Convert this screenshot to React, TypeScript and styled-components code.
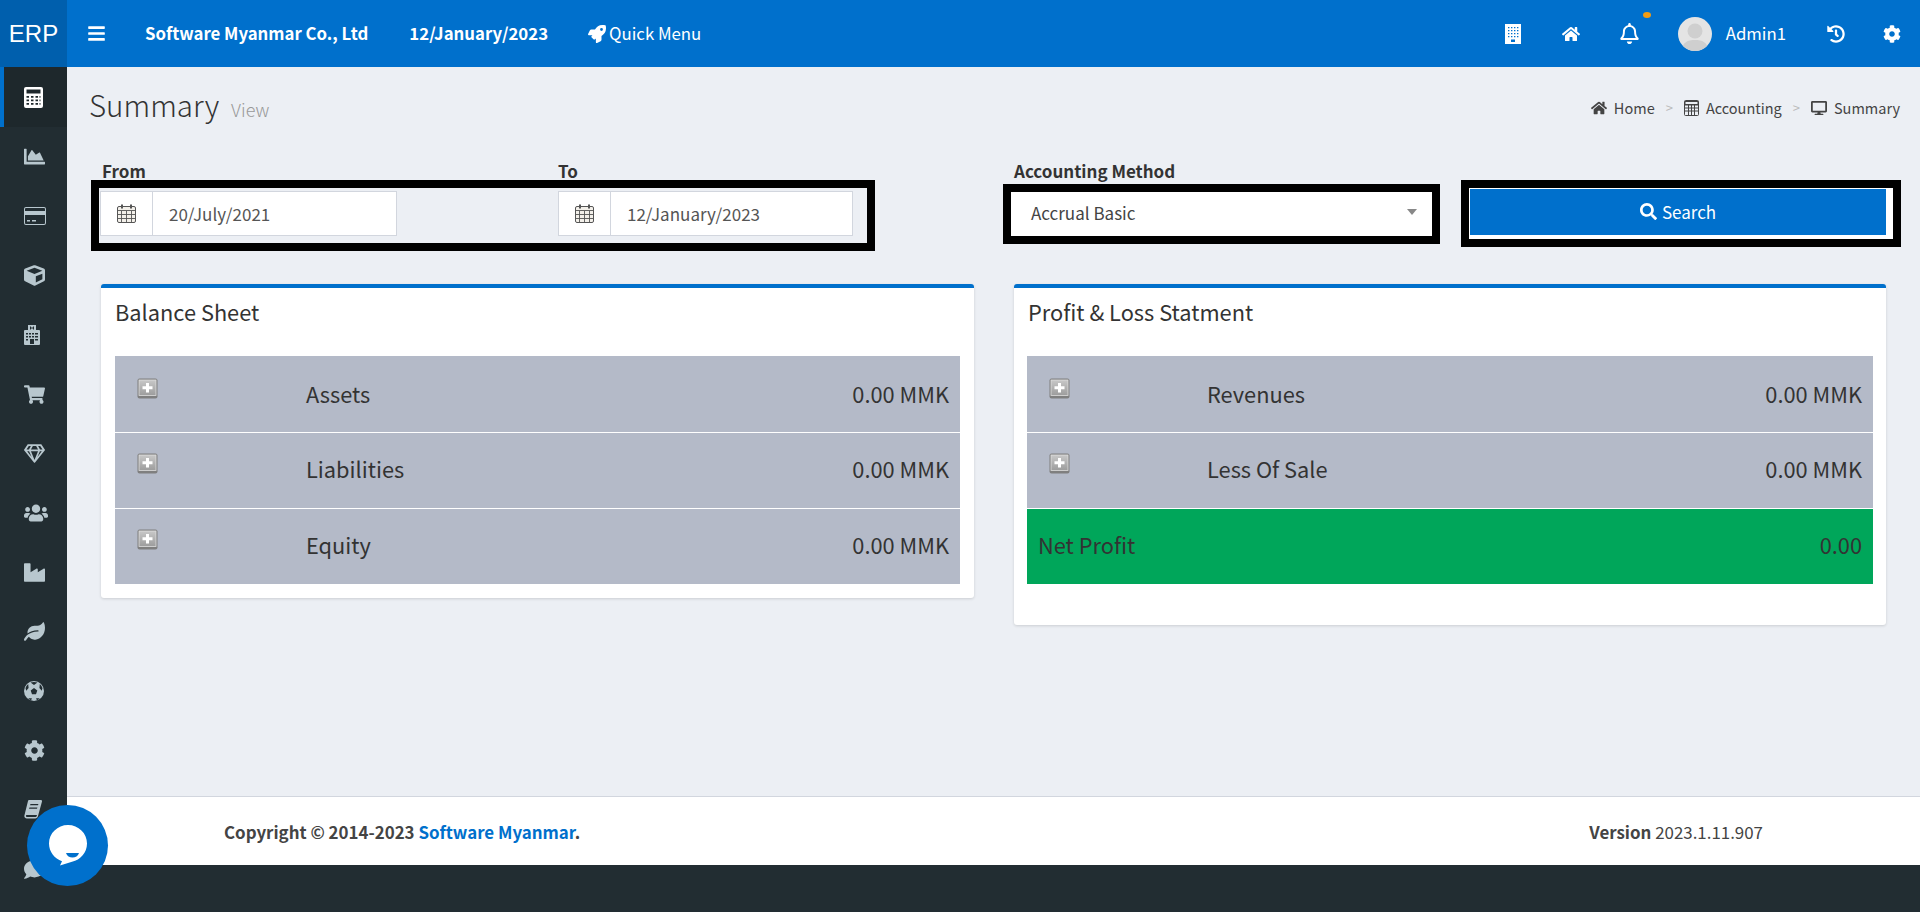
import React from "react";
import styled, { createGlobalStyle } from "styled-components";
import {
  FaBars, FaRocket, FaHome, FaRegBell, FaHistory, FaCog, FaDesktop, FaSearch,
  FaChartArea, FaCube, FaShoppingCart, FaRegGem, FaUsers, FaIndustry,
  FaLeaf, FaComment,
} from "react-icons/fa";

const BLUE = "#0070cc";
const DARK = "#222d32";
const FONT = `"Noto Sans CJK SC", "Source Sans Pro", "Open Sans", sans-serif`;

const Global = createGlobalStyle`
  html, body { margin: 0; padding: 0; height: 912px; overflow: hidden; background: ${DARK}; }
  * { box-sizing: border-box; }
  body { font-family: ${FONT}; color: #333; }
`;

const Page = styled.div`
  position: relative;
  width: 1920px;
  height: 912px;
  display: grid;
  grid-template-columns: 67px 1fr;
  grid-template-rows: 67px 1fr;
  overflow: hidden;
`;

/* ---------- header ---------- */
const Header = styled.header`
  grid-column: 1 / 3;
  display: flex;
  align-items: center;
  padding-right: 19px;
  background: ${BLUE};
  color: #fff;
`;
const Logo = styled.div`
  width: 67px;
  height: 67px;
  display: flex;
  align-items: center;
  justify-content: center;
  background: #005fad;
  font-family: "Liberation Sans", sans-serif;
  font-size: 24px;
`;
const HeaderText = styled.span<{ $bold?: boolean; $left: number }>`
  margin-left: ${(p) => p.$left}px;
  padding-bottom: 1px;
  font-size: 16.8px;
  line-height: 20px;
  font-weight: ${(p) => (p.$bold ? 700 : 400)};
  white-space: nowrap;
`;
const HeaderIcon = styled.span<{ $left: number; $size?: number }>`
  position: relative;
  display: flex;
  margin-left: ${(p) => p.$left}px;
  font-size: ${(p) => p.$size ?? 18}px;
`;
const Dot = styled.i`
  position: absolute;
  top: -11px;
  right: -11px;
  width: 8px;
  height: 6px;
  border-radius: 50%;
  background: #f39c12;
`;
const Spacer = styled.div`
  flex: 1;
`;
const Avatar = styled.svg`
  width: 34px;
  height: 34px;
  margin-left: 38px;
  border-radius: 50%;
`;

/* ---------- sidebar ---------- */
const Sidebar = styled.nav`
  background: ${DARK};
  overflow: hidden;
  display: flex;
  flex-direction: column;
`;
const SideItem = styled.div<{ $active?: boolean }>`
  flex: 0 0 ${(p) => (p.$active ? 60 : 59.4)}px;
  display: flex;
  align-items: center;
  padding-left: ${(p) => (p.$active ? 20 : 24)}px;
  color: ${(p) => (p.$active ? "#fff" : "#b8c7ce")};
  font-size: 21px;
  background: ${(p) => (p.$active ? "#1e282c" : "transparent")};
  border-left: ${(p) => (p.$active ? `4px solid ${BLUE}` : "none")};
`;

/* ---------- main ---------- */
const Main = styled.main`
  display: flex;
  flex-direction: column;
  min-width: 0;
  background: #eceff4;
`;
const Content = styled.div`
  flex: 1;
  padding: 0 20px 0 24px;
`;
const TitleBar = styled.div`
  height: 96px;
  display: flex;
  align-items: flex-start;
  justify-content: space-between;
`;
const Title = styled.h1`
  margin: 16px 0 0 -2px;
  font-size: 29.5px;
  line-height: 42px;
  font-weight: 300;
  color: #333;
  display: flex;
  align-items: baseline;
`;
const TitleSub = styled.small`
  margin-left: 12px;
  font-size: 18px;
  font-weight: 300;
  color: #999;
`;
const Crumbs = styled.div`
  margin-top: 30px;
  display: flex;
  align-items: center;
  font-size: 14.5px;
  line-height: 22px;
  color: #444;
`;
const CrumbIcon = styled.span`
  display: flex;
  font-size: 16px;
  margin-right: 7px;
  color: #444;
`;
const CrumbSep = styled.span`
  margin: 0 11px;
  color: #bbb;
  font-size: 13px;
`;

const FilterRow = styled.div`
  display: flex;
  align-items: flex-start;
  height: 121px;
  & > * {
    flex-shrink: 0;
  }
`;
const FieldLabel = styled.label`
  display: block;
  font-size: 17px;
  line-height: 15px;
  font-weight: 700;
  color: #333;
`;
const DateBlock = styled.div`
  width: 784px;
`;
const LabelRow = styled.div`
  display: flex;
  height: 17px;
`;
const LabelCell = styled.div<{ $width?: number; $pad?: number }>`
  width: ${(p) => p.$width ?? 300}px;
  padding-left: ${(p) => p.$pad ?? 0}px;
`;
const Frame = styled.div`
  border: 8px solid #000;
`;
const DateFrame = styled(Frame)`
  height: 71px;
  padding: 3px 1px;
  display: flex;
`;
const DateGroup = styled.div<{ $width: number; $gap?: number }>`
  width: ${(p) => p.$width}px;
  margin-right: ${(p) => p.$gap ?? 0}px;
  height: 45px;
  display: flex;
  background: #fff;
  border: 1px solid #d2d6de;
`;
const Addon = styled.div`
  width: 52px;
  display: flex;
  align-items: center;
  justify-content: center;
  border-right: 1px solid #d2d6de;
  color: #555;
`;
const DateValue = styled.div`
  flex: 1;
  padding-left: 16px;
  display: flex;
  align-items: center;
  font-size: 17px;
  color: #555;
`;
const SelectBlock = styled.div`
  width: 437px;
  margin-left: 128px;
`;
const SelectLabel = styled(FieldLabel)`
  height: 21px;
  padding-left: 11px;
`;
const SelectFrame = styled(Frame)`
  height: 60px;
  background: #fff;
  padding: 0 15px 4px 20px;
  display: flex;
  align-items: center;
  justify-content: space-between;
  font-size: 17px;
  color: #444;
`;
const Caret = styled.i`
  border-left: 5px solid transparent;
  border-right: 5px solid transparent;
  border-top: 6px solid #888;
`;
const SearchFrame = styled(Frame)`
  width: 440px;
  height: 67px;
  margin: 17px 0 0 21px;
  background: #fff;
  padding: 1px 7px 4px 1px;
`;
const SearchButton = styled.button`
  width: 100%;
  height: 46px;
  border: 0;
  padding: 0 0 2px;
  background: ${BLUE};
  color: #fff;
  font-family: ${FONT};
  font-size: 17px;
  display: flex;
  align-items: center;
  justify-content: center;
  gap: 5px;
`;

const Cards = styled.div`
  display: grid;
  grid-template-columns: 873px 872px;
  column-gap: 40px;
  align-items: start;
  margin-left: 10px;
`;
const Card = styled.section<{ $right: number; $bottom: number }>`
  background: #fff;
  border-top: 4px solid ${BLUE};
  border-radius: 3px;
  box-shadow: 0 1px 3px rgba(0, 0, 0, 0.14);
  padding: 0 ${(p) => p.$right}px ${(p) => p.$bottom}px 14px;
`;
const CardTitle = styled.h3`
  margin: 0;
  height: 68px;
  padding-top: 10px;
  font-size: 21.8px;
  line-height: 28px;
  font-weight: 400;
  color: #333;
`;
const Table = styled.div<{ $offset?: number }>`
  margin-left: ${(p) => p.$offset ?? 0}px;
`;
const Row = styled.div<{ $first?: boolean; $labelAt: number }>`
  height: 76px;
  display: grid;
  grid-template-columns: ${(p) => p.$labelAt}px 1fr auto;
  align-items: center;
  padding: 0 11px ${(p) => (p.$first ? 2 : 4)}px 0;
  background: #b4bac8;
  border-top: ${(p) => (p.$first ? "none" : "1px solid #fff")};
  font-size: 21.8px;
  color: #333;
`;
const NetRow = styled.div`
  height: 76px;
  display: flex;
  align-items: center;
  justify-content: space-between;
  padding: 0 11px 4px 11px;
  background: #00a65a;
  border-top: 1px solid #fff;
  font-size: 21.8px;
  color: #333;
`;
const PlusIcon = styled.svg`
  width: 21px;
  height: 21px;
  margin: -10px 0 0 22px;
`;

const Footer = styled.footer`
  height: 69px;
  display: flex;
  align-items: center;
  justify-content: space-between;
  padding: 0 157px 0 157px;
  background: #fff;
  border-top: 1px solid #d2d6de;
  font-size: 16.9px;
  color: #444;
`;
const Strong = styled.strong`
  font-weight: 700;
`;
const FootLink = styled.span`
  color: ${BLUE};
  font-weight: 700;
`;
const BottomStrip = styled.div`
  height: 47px;
  background: ${DARK};
`;

const Chat = styled.div`
  position: absolute;
  left: 27px;
  top: 805px;
  width: 81px;
  height: 81px;
  border-radius: 50%;
  background: ${BLUE};
  display: flex;
  align-items: center;
  justify-content: center;
`;

/* ---------- drawn icons ---------- */
const CalcSolid = () => (
  <svg width="19" height="21" viewBox="0 0 19 21">
    <path
      fill="currentColor"
      fillRule="evenodd"
      d="M2 0h15a2 2 0 0 1 2 2v17a2 2 0 0 1-2 2H2a2 2 0 0 1-2-2V2a2 2 0 0 1 2-2zM2.500 2.500v4h14v-4zM2.500 9v1.800h2.500V9zm4.500 0v1.800h2.500V9zm4.500 0v1.800h2.500V9zm4 0v1.800h1V9zM2.500 12.500v1.800h2.500v-1.800zm4.500 0v1.800h2.500v-1.800zm4.500 0v1.800h2.500v-1.800zm4 0v1.800h1v-1.800zM2.500 16v1.800h2.500V16zm4.500 0v1.800h2.500V16zm4.500 0v1.800h2.500V16zm4 0v1.800h1V16z"
    />
  </svg>
);
const CalcOutline = () => (
  <svg width="15" height="16" viewBox="0 0 15 16" fill="none" stroke="currentColor">
    <rect x="0.5" y="0.5" width="14" height="15" rx="1" />
    <path d="M1 5h13M1 8h13M1 11h13M4.500 5v10M7.500 5v10M10.500 5v10" />
    <path d="M1 1.500h13v3H1z" fill="#eceff4" />
  </svg>
);
const Calendar = () => (
  <svg width="19" height="19" viewBox="0 0 19 19" fill="none" stroke="#555">
    <rect x="0.5" y="2.500" width="18" height="16" rx="1.500" fill="#f3f0ea" />
    <path d="M1 6.500h17M1 10.500h17M1 14.500h17M4.500 7v11M9.500 7v11M14.500 7v11" strokeWidth="0.9" />
    <path d="M5 0.500v4M14 0.500v4" strokeWidth="2" />
  </svg>
);
const CreditCard = () => (
  <svg width="22" height="18" viewBox="0 0 22 18">
    <path
      fill="currentColor"
      fillRule="evenodd"
      d="M2 0h18a2 2 0 0 1 2 2v14a2 2 0 0 1-2 2H2a2 2 0 0 1-2-2V2a2 2 0 0 1 2-2zm-1 2v2h20V2a1 1 0 0 0-1-1H2a1 1 0 0 0-1 1zm0 6v8a1 1 0 0 0 1 1h18a1 1 0 0 0 1-1V8zm2 5h3v1.500H3zm5 0h4v1.500H8z"
    />
  </svg>
);
const Hospital = () => (
  <svg width="16" height="20" viewBox="0 0 16 20">
    <path
      fill="currentColor"
      fillRule="evenodd"
      d="M4 0h8v5h3a1 1 0 0 1 1 1v13a1 1 0 0 1-1 1H1a1 1 0 0 1-1-1V6a1 1 0 0 1 1-1h3zM6 1.500v3h1V3.500h2v1h1v-3H9v1H7v-1zM2 8v1.500h2V8zm3 0v1.500h2V8zm3 0v1.500h2V8zm3 0v1.500h3V8zM2 11v1.500h2V11zm3 0v1.500h2V11zm3 0v1.500h2V11zm3 0v1.500h3V11zM2 14v1.500h2V14zm9 0v1.500h3V14zM6 14v5h4v-5z"
    />
  </svg>
);
const SoccerBall = () => (
  <svg width="20" height="20" viewBox="0 0 20 20">
    <circle cx="10" cy="10" r="10" fill="currentColor" />
    <path fill={DARK} d="M10 7l3.300 2.400-1.300 3.900H8l-1.300-3.900zM6.500 1.600C8.800.8 11.200.8 13.500 1.600L10 4zM1.500 7c.6-1.600 1.500-2.900 2.700-4L4.600 7l-2.400 2.800zM18.500 7c-.6-1.600-1.500-2.900-2.700-4L15.400 7l2.400 2.800zM4.300 17.500c1-.3 2.600-.3 3.700-.1l-1 1.800c-1-.3-1.900-.9-2.700-1.700zM15.700 17.500c-1-.3-2.600-.3-3.700-.1l1 1.800c1-.3 1.900-.9 2.700-1.700z" />
  </svg>
);
const SlantBook = () => (
  <svg width="18" height="19" viewBox="0 0 18 19">
    <path
      fill="currentColor"
      fillRule="evenodd"
      d="M5 0h12c.8 0 1.200.7 1 1.400L14 16c-.3 1.200-1.300 2.500-2.800 2.500H2.800C1.200 18.500 0 17 .4 15.500L4 1c.1-.6.500-1 1-1zm1.500 4L6 5.200h8L14.400 4zM5.500 7.500L5 8.800h8l.4-1.300zM2 15.500c-.1.800.3 1.500 1.100 1.500h8.500c.5 0 1-.4 1.100-.9l.3-1.100H3.200c-.6 0-1.100 0-1.200.5z"
    />
  </svg>
);
const Building = () => (
  <svg width="16" height="20" viewBox="0 0 16 20">
    <path
      fill="#fff"
      fillRule="evenodd"
      d="M0 0h16v20H0zM3 3v1.200h1.400V3zm3 0v1.200h1.400V3zm3 0v1.200h1.400V3zm3 0v1.200h1.400V3zM3 6v1.200h1.400V6zm3 0v1.200h1.400V6zm3 0v1.200h1.400V6zm3 0v1.200h1.400V6zM3 9v1.200h1.400V9zm3 0v1.200h1.400V9zm3 0v1.200h1.400V9zm3 0v1.200h1.400V9zM3 12v1.200h1.400V12zm3 0v1.200h1.400V12zm3 0v1.200h1.400V12zm3 0v1.200h1.400V12zM6 15.500V18h4v-2.500z"
    />
  </svg>
);
const Plus = () => (
  <PlusIcon viewBox="0 0 21 21">
    <defs>
      <linearGradient id="plusFill" x1="0" y1="0" x2="0" y2="1">
        <stop offset="0" stopColor="#c8c8c8" />
        <stop offset="1" stopColor="#9c9c9c" />
      </linearGradient>
    </defs>
    <rect x="0.5" y="0.500" width="20" height="20" rx="2" fill="#7f7f7f" />
    <rect x="2" y="2" width="17" height="15.500" fill="url(#plusFill)" stroke="#dedede" strokeWidth="0.8" />
    <path d="M10.500 5v9.500M5.500 9.800h10" stroke="#fff" strokeWidth="3" />
  </PlusIcon>
);

const sideIcons = [
  <FaChartArea />, <CreditCard />, <FaCube />, <Hospital />, <FaShoppingCart />, <FaRegGem />,
  <FaUsers size={24} />, <FaIndustry />, <FaLeaf />, <SoccerBall />, <FaCog />, <SlantBook />, <FaComment />,
];

const balanceRows = ["Assets", "Liabilities", "Equity"];
const profitRows = ["Revenues", "Less Of Sale"];

const DateField = ({ value, width, gap }: { value: string; width: number; gap?: number }) => (
  <DateGroup $width={width} $gap={gap}>
    <Addon><Calendar /></Addon>
    <DateValue>{value}</DateValue>
  </DateGroup>
);

export default function App() {
  return (
    <Page>
      <Global />
      <Header>
        <Logo>ERP</Logo>
        <HeaderIcon $left={20} $size={19}><FaBars /></HeaderIcon>
        <HeaderText $bold $left={39}>Software Myanmar Co., Ltd</HeaderText>
        <HeaderText $bold $left={41}>12/January/2023</HeaderText>
        <HeaderIcon $left={40} $size={18}><FaRocket /></HeaderIcon>
        <HeaderText $left={3}>Quick Menu</HeaderText>
        <Spacer />
        <HeaderIcon $left={0}><Building /></HeaderIcon>
        <HeaderIcon $left={41}><FaHome /></HeaderIcon>
        <HeaderIcon $left={39} $size={21}><FaRegBell /><Dot /></HeaderIcon>
        <Avatar viewBox="0 0 34 34">
          <rect width="34" height="34" fill="#e4e4e4" />
          <circle cx="17" cy="14" r="7.500" fill="#cfcfcf" />
          <path d="M4 34c0-9 6-11 13-11s13 2 13 11z" fill="#cfcfcf" />
        </Avatar>
        <HeaderText $left={14}>Admin1</HeaderText>
        <HeaderIcon $left={41}><FaHistory /></HeaderIcon>
        <HeaderIcon $left={38}><FaCog /></HeaderIcon>
      </Header>

      <Sidebar>
        <SideItem $active><CalcSolid /></SideItem>
        {sideIcons.map((icon, i) => (
          <SideItem key={i}>{icon}</SideItem>
        ))}
      </Sidebar>

      <Main>
        <Content>
          <TitleBar>
            <Title>Summary<TitleSub>View</TitleSub></Title>
            <Crumbs>
              <CrumbIcon><FaHome /></CrumbIcon>Home
              <CrumbSep>&gt;</CrumbSep>
              <CrumbIcon><CalcOutline /></CrumbIcon>Accounting
              <CrumbSep>&gt;</CrumbSep>
              <CrumbIcon><FaDesktop /></CrumbIcon>Summary
            </Crumbs>
          </TitleBar>

          <FilterRow>
            <DateBlock>
              <LabelRow>
                <LabelCell $width={467} $pad={11}><FieldLabel>From</FieldLabel></LabelCell>
                <LabelCell><FieldLabel>To</FieldLabel></LabelCell>
              </LabelRow>
              <DateFrame>
                <DateField value="20/July/2021" width={297} gap={161} />
                <DateField value="12/January/2023" width={295} />
              </DateFrame>
            </DateBlock>
            <SelectBlock>
              <SelectLabel>Accounting Method</SelectLabel>
              <SelectFrame>
                Accrual Basic
                <Caret />
              </SelectFrame>
            </SelectBlock>
            <SearchFrame>
              <SearchButton><FaSearch size={17} />Search</SearchButton>
            </SearchFrame>
          </FilterRow>

          <Cards>
            <Card $right={14} $bottom={14}>
              <CardTitle>Balance Sheet</CardTitle>
              <Table>
                {balanceRows.map((label, i) => (
                  <Row key={label} $first={i === 0} $labelAt={191}>
                    <Plus />
                    <span>{label}</span>
                    <span>0.00 MMK</span>
                  </Row>
                ))}
              </Table>
            </Card>
            <Card $right={13} $bottom={41}>
              <CardTitle>Profit &amp; Loss Statment</CardTitle>
              <Table $offset={-1}>
                {profitRows.map((label, i) => (
                  <Row key={label} $first={i === 0} $labelAt={180}>
                    <Plus />
                    <span>{label}</span>
                    <span>0.00 MMK</span>
                  </Row>
                ))}
                <NetRow>
                  <span>Net Profit</span>
                  <span>0.00</span>
                </NetRow>
              </Table>
            </Card>
          </Cards>
        </Content>

        <Footer>
          <span>
            <Strong>Copyright © 2014-2023 </Strong>
            <FootLink>Software Myanmar</FootLink>
            <Strong>.</Strong>
          </span>
          <span><Strong>Version</Strong> 2023.1.11.907</span>
        </Footer>
        <BottomStrip />
      </Main>

      <Chat>
        <svg width="40" height="44" viewBox="0 0 40 44">
          <path
            fill="#fff"
            d="M20 1c10.500 0 19 8.200 19 18.500 0 9-6.500 16.500-15 18.300L12 41.500l2-4.300C6.500 34.800 1 27.800 1 19.500 1 9.200 9.500 1 20 1z"
          />
          <path fill={BLUE} d="M18 29h13c-1 3-3.500 4.500-6.500 4.500S19 32 18 29z" />
        </svg>
      </Chat>
    </Page>
  );
}
